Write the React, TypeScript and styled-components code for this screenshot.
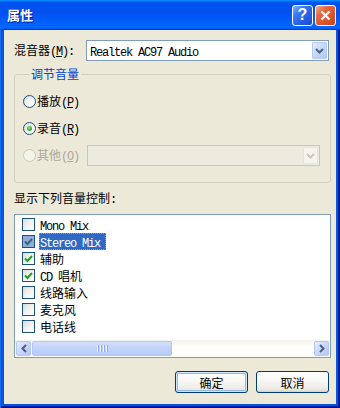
import React from 'react';
import styled, { createGlobalStyle, css } from 'styled-components';

const CJK = `"Noto Sans CJK SC", "Liberation Sans", sans-serif`;

const GlobalStyle = createGlobalStyle`
  html, body {
    margin: 0;
    padding: 0;
    background: #ffffff;
  }
  body {
    font-family: ${CJK};
    font-size: 12px;
    color: #000000;
  }
`;

const Window = styled.div`
  width: 340px;
  height: 408px;
  display: flex;
  flex-direction: column;
  overflow: hidden;
`;

const TitleBar = styled.div`
  height: 30px;
  flex-shrink: 0;
  display: flex;
  align-items: center;
  padding: 0 4px 0 7px;
  box-sizing: border-box;
  background: linear-gradient(180deg, #0997ff, #0053ee 8%, #0050ee 40%, #0066ff 88%, #0066ff 93%, #005bff 95%, #003dd7 96%, #003dd7);
`;

const Title = styled.span`
  flex: 1;
  color: #ffffff;
  font-family: ${CJK};
  font-size: 13px;
  font-weight: 700;
  line-height: 16px;
  text-shadow: 1px 1px 0 #0f1089;
`;

const CaptionButtons = styled.div`
  display: flex;
  gap: 2px;
`;

const CaptionButton = styled.div<{ $kind: 'help' | 'close' }>`
  width: 21px;
  height: 21px;
  box-sizing: border-box;
  border: 1px solid #ffffff;
  border-radius: 3px;
  display: flex;
  align-items: center;
  justify-content: center;
  color: #ffffff;
  font-family: "Liberation Sans", sans-serif;
  font-weight: 700;
  font-size: 16px;
  line-height: 1;
  ${p => p.$kind === 'help' ? css`
    background: linear-gradient(135deg, #8bb4ff 0%, #3a78f3 30%, #2459e0 70%, #1d4fd6 100%);
  ` : css`
    background: linear-gradient(135deg, #f6b39b 0%, #e66a43 30%, #d8512a 70%, #c7421b 100%);
  `}
`;

const Frame = styled.div`
  flex: 1;
  display: flex;
  padding: 0 4px 4px 4px;
  background: #0855dd;
  box-shadow: inset 1px 0 #166aee, inset -1px 0 #00138c, inset 0 -1px #00138c, inset -2px 0 #001ea0, inset 0 -2px #001ea0;
`;

const Client = styled.div`
  flex: 1;
  display: flex;
  flex-direction: column;
  background: #ece9d8;
  padding: 10px 5px 0 10px;
  font-family: ${CJK};
  font-size: 12px;
`;

const Latin = styled.span`
  font-family: "Liberation Mono", monospace;
  font-size: 12px;
  letter-spacing: -1.2px;
  white-space: pre;
`;

const MixerRow = styled.div`
  display: flex;
  align-items: center;
  height: 21px;
`;

const FieldLabel = styled.span`
  width: 72px;
  line-height: 14px;
  white-space: nowrap;
`;

const Combo = styled.div<{ $width: number; $disabled?: boolean }>`
  width: ${p => p.$width}px;
  height: 21px;
  box-sizing: border-box;
  padding: 1px;
  display: flex;
  align-items: stretch;
  border: 1px solid ${p => (p.$disabled ? '#c9c7ba' : '#7f9db9')};
  background: ${p => (p.$disabled ? '#edebe0' : '#ffffff')};
`;

const ComboText = styled.span`
  flex: 1;
  padding-left: 2px;
  line-height: 17px;
`;

const DropButton = styled.div<{ $disabled?: boolean }>`
  width: 15px;
  box-sizing: border-box;
  border-radius: 1px;
  display: flex;
  align-items: center;
  justify-content: center;
  ${p => p.$disabled ? css`
    border: 1px solid #e5e4dd;
    background: #f5f4ef;
    color: #c9c7ba;
  ` : css`
    border: 1px solid #b7c9f3;
    background: linear-gradient(135deg, #e4ecff 0%, #c6d6fc 50%, #b4c8f6 100%);
    color: #4d6185;
  `}
`;

const GroupBox = styled.fieldset`
  margin: 6px 0 0 0;
  padding: 10px 0 16px 8px;
  min-width: 0;
  border: 1px solid #d0d0bf;
  border-radius: 3px;
  display: flex;
  flex-direction: column;
  gap: 6px;
`;

const Legend = styled.legend`
  margin-left: 6px;
  padding: 0 2px;
  color: #0046d5;
  line-height: 14px;
`;

const RadioRow = styled.label<{ $disabled?: boolean }>`
  display: flex;
  align-items: center;
  height: 21px;
  color: ${p => (p.$disabled ? '#aca899' : '#000000')};
`;

const RadioText = styled.span<{ $width?: number }>`
  ${p => p.$width && css`width: ${p.$width}px;`}
  line-height: 14px;
  white-space: nowrap;
`;

const RadioCircle = styled.span<{ $checked?: boolean; $disabled?: boolean }>`
  width: 13px;
  height: 13px;
  box-sizing: border-box;
  border-radius: 50%;
  margin-right: 1px;
  flex-shrink: 0;
  display: flex;
  align-items: center;
  justify-content: center;
  border: 1px solid ${p => (p.$disabled ? '#cac8bb' : '#1c5180')};
  background: ${p => (p.$disabled ? '#f5f4ea' : 'radial-gradient(circle at 70% 70%, #ffffff 0%, #f4f4f0 40%, #d8d8d1 100%)')};
  &::after {
    content: "";
    display: ${p => (p.$checked ? 'block' : 'none')};
    width: 5px;
    height: 5px;
    border-radius: 50%;
    background: radial-gradient(circle at 40% 40%, #8be08a 0%, #3fb23e 50%, #1f9a1f 100%);
  }
`;

const SectionLabel = styled.div`
  margin-top: 8px;
  line-height: 14px;
`;

const ListBox = styled.div`
  margin-top: 7px;
  height: 144px;
  box-sizing: border-box;
  border: 1px solid #7f9db9;
  background: #ffffff;
  display: flex;
  flex-direction: column;
`;

const Items = styled.div`
  padding-top: 1px;
`;

const Item = styled.div`
  height: 17px;
  display: flex;
  align-items: center;
  padding-left: 7px;
`;

const CheckBox = styled.span<{ $selected?: boolean }>`
  width: 13px;
  height: 13px;
  box-sizing: border-box;
  border: 1px solid #1c5180;
  margin-right: 4px;
  flex-shrink: 0;
  display: flex;
  align-items: center;
  justify-content: center;
  background: ${p => (p.$selected ? '#93abd7' : 'linear-gradient(135deg, #dcdcd7 0%, #f2f2ee 50%, #ffffff 100%)')};
  color: ${p => (p.$selected ? '#2d6a8a' : '#21a121')};
`;

const ItemText = styled.span<{ $selected?: boolean }>`
  display: inline-block;
  height: 17px;
  line-height: 17px;
  padding: 0 6px 0 1px;
  white-space: nowrap;
  ${p => p.$selected && css`
    background: #316ac5;
    color: #ffffff;
    outline: 1px dotted #ce953a;
    outline-offset: -1px;
  `}
`;

const HScroll = styled.div`
  margin-top: auto;
  height: 17px;
  box-sizing: border-box;
  padding: 1px;
  display: flex;
  align-items: stretch;
  background: linear-gradient(180deg, #f3f1ec 0%, #fefefb 40%, #fefefb 100%);
`;

const ScrollArrow = styled.div`
  width: 15px;
  box-sizing: border-box;
  border: 1px solid #b4c8f6;
  border-radius: 2px;
  background: linear-gradient(135deg, #e6eeff 0%, #c8d7fc 50%, #b4c7f5 100%);
  color: #4d6185;
  display: flex;
  align-items: center;
  justify-content: center;
`;

const Track = styled.div`
  flex: 1;
  padding: 0 1px;
  display: flex;
`;

const Thumb = styled.div`
  width: 140px;
  box-sizing: border-box;
  border: 1px solid #b4c8f6;
  border-radius: 2px;
  background: linear-gradient(180deg, #d2defd 0%, #c1d3fb 50%, #b7cbf8 100%);
  display: flex;
  align-items: center;
  justify-content: center;
  gap: 1px;
`;

const Grip = styled.span`
  width: 1px;
  height: 7px;
  background: #eef4fe;
  box-shadow: 1px 0 #8cb0f8;
  margin-right: 1px;
`;

const ButtonRow = styled.div`
  margin-top: 13px;
  padding-right: 2px;
  display: flex;
  justify-content: flex-end;
  gap: 8px;
`;

const PushButton = styled.button<{ $default?: boolean }>`
  width: 73px;
  height: 22px;
  box-sizing: border-box;
  border: 1px solid #003c74;
  border-radius: 3px;
  padding: 0;
  font-family: ${CJK};
  font-size: 12px;
  color: #000000;
  background: linear-gradient(180deg, #ffffff 0%, #f7f7f4 45%, #ecebe6 85%, #d6d0c5 100%);
  ${p => p.$default && css`
    box-shadow: inset 0 0 0 1px #cee7ff, inset 0 0 0 2px #98b8ea;
  `}
`;

const Chevron = ({ dir }: { dir: 'down' | 'left' | 'right' }) => {
  if (dir === 'down') {
    return (
      <svg width="9" height="6" viewBox="0 0 9 6">
        <path d="M1 1 L4.5 4.5 L8 1" fill="none" stroke="currentColor" strokeWidth="2" />
      </svg>
    );
  }
  const d = dir === 'left' ? 'M5 1 L1.5 4.5 L5 8' : 'M1 1 L4.5 4.5 L1 8';
  return (
    <svg width="6" height="9" viewBox="0 0 6 9">
      <path d={d} fill="none" stroke="currentColor" strokeWidth="2" />
    </svg>
  );
};

const CheckMark = () => (
  <svg width="9" height="9" viewBox="0 0 9 9">
    <path d="M1 4.5 L3.5 7 L8 2" fill="none" stroke="currentColor" strokeWidth="2" />
  </svg>
);

const CloseGlyph = () => (
  <svg width="11" height="11" viewBox="0 0 11 11">
    <path d="M1.5 1.5 L9.5 9.5 M9.5 1.5 L1.5 9.5" stroke="#ffffff" strokeWidth="2.2" />
  </svg>
);

type Control = { label: React.ReactNode; checked: boolean; selected?: boolean };

const controls: Control[] = [
  { label: <Latin>Mono Mix</Latin>, checked: false },
  { label: <Latin>Stereo Mix</Latin>, checked: true, selected: true },
  { label: '辅助', checked: true },
  { label: <><Latin>{'CD '}</Latin>唱机</>, checked: true },
  { label: '线路输入', checked: false },
  { label: '麦克风', checked: false },
  { label: '电话线', checked: false },
];

const Key = ({ k }: { k: string }) => (
  <Latin>(<u>{k}</u>)</Latin>
);

export default function App() {
  return (
    <>
      <GlobalStyle />
      <Window>
        <TitleBar>
          <Title>属性</Title>
          <CaptionButtons>
            <CaptionButton $kind="help">?</CaptionButton>
            <CaptionButton $kind="close"><CloseGlyph /></CaptionButton>
          </CaptionButtons>
        </TitleBar>
        <Frame>
          <Client>
            <MixerRow>
              <FieldLabel>混音器<Key k="M" /><Latin>:</Latin></FieldLabel>
              <Combo $width={243}>
                <ComboText><Latin>Realtek AC97 Audio</Latin></ComboText>
                <DropButton><Chevron dir="down" /></DropButton>
              </Combo>
            </MixerRow>

            <GroupBox>
              <Legend>调节音量</Legend>
              <RadioRow>
                <RadioCircle />
                <RadioText>播放<Key k="P" /></RadioText>
              </RadioRow>
              <RadioRow>
                <RadioCircle $checked />
                <RadioText>录音<Key k="R" /></RadioText>
              </RadioRow>
              <RadioRow $disabled>
                <RadioCircle $disabled />
                <RadioText $width={50}>其他<Key k="O" /></RadioText>
                <Combo $width={233} $disabled>
                  <ComboText />
                  <DropButton $disabled><Chevron dir="down" /></DropButton>
                </Combo>
              </RadioRow>
            </GroupBox>

            <SectionLabel>显示下列音量控制<Latin>:</Latin></SectionLabel>

            <ListBox>
              <Items>
                {controls.map((c, i) => (
                  <Item key={i}>
                    <CheckBox $selected={c.selected}>{c.checked && <CheckMark />}</CheckBox>
                    <ItemText $selected={c.selected}>{c.label}</ItemText>
                  </Item>
                ))}
              </Items>
              <HScroll>
                <ScrollArrow><Chevron dir="left" /></ScrollArrow>
                <Track>
                  <Thumb>
                    <Grip /><Grip /><Grip /><Grip />
                  </Thumb>
                </Track>
                <ScrollArrow><Chevron dir="right" /></ScrollArrow>
              </HScroll>
            </ListBox>

            <ButtonRow>
              <PushButton $default>确定</PushButton>
              <PushButton>取消</PushButton>
            </ButtonRow>
          </Client>
        </Frame>
      </Window>
    </>
  );
}
